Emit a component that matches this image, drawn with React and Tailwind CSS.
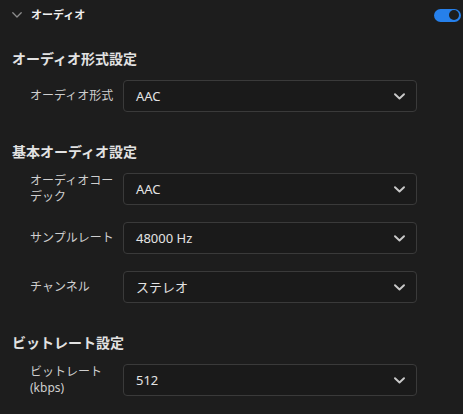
function SelectBox({ value }) {
    return (
        <div className="flex-1 h-8 flex items-center justify-between pl-3 pr-[11px] rounded-[4px] border border-[#3a3a3a] bg-[#1a1a1a]">
            <span className="text-[13px] leading-[16px] text-[#e4e4e4]">{value}</span>
            <svg width="11" height="7" viewBox="0 0 11 7" fill="none">
                <path d="M1 1.2L5.5 5.5L10 1.2" stroke="#c9c9c9" strokeWidth="1.9" strokeLinecap="round" strokeLinejoin="round" />
            </svg>
        </div>
    );
}

function FieldRow({ label, value }) {
    return (
        <div className="flex items-center gap-2 pl-[30px] pr-[46px]">
            <div className="w-[85px] shrink-0 text-[12px] leading-[16px] text-[#cfcfcf]">
                {label}
            </div>
            <SelectBox value={value} />
        </div>
    );
}

function Section({ title, children }) {
    return (
        <div className="flex flex-col">
            <h3 className="px-3 text-[14px] leading-[20px] font-bold text-[#e2e2e2]">
                {title}
            </h3>
            <div className="mt-[11px] flex flex-col gap-[17px]">
                {children}
            </div>
        </div>
    );
}

function App() {
    return (
        <div className="w-[463px] h-[414px] overflow-hidden bg-[#1d1d1d] font-['Noto_Sans','Noto_Sans_CJK_JP',sans-serif]">
            <div className="h-[30px] flex items-center justify-between pl-3 pr-[2px]">
                <div className="flex items-center gap-[9px]">
                    {/* collapse chevron */}
                    <svg width="10" height="6" viewBox="0 0 10 6" fill="none">
                        <path d="M0.8 0.8L5 5L9.2 0.8" stroke="#8c8c8c" strokeWidth="1.3" strokeLinecap="round" strokeLinejoin="round" />
                    </svg>
                    <span className="text-[11px] leading-[14px] font-bold text-[#f0f0f0]">オーディオ</span>
                </div>
                <div className="w-[27px] h-[13px] rounded-full bg-[#2680eb] flex items-center justify-end pr-[2px]">
                    <div className="w-[10px] h-[10px] rounded-full bg-[#1d1d1d]" />
                </div>
            </div>

            <div className="mt-[19px] flex flex-col gap-[30px]">
                <Section title="オーディオ形式設定">
                    <FieldRow label="オーディオ形式" value="AAC" />
                </Section>

                <Section title="基本オーディオ設定">
                    <FieldRow label="オーディオコーデック" value="AAC" />
                    <FieldRow label="サンプルレート" value="48000 Hz" />
                    <FieldRow label="チャンネル" value="ステレオ" />
                </Section>

                <Section title="ビットレート設定">
                    <FieldRow label="ビットレート (kbps)" value="512" />
                </Section>
            </div>
        </div>
    );
}

export default App;
